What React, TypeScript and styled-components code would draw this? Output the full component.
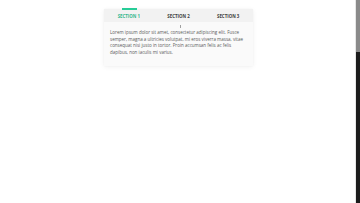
import React from "react";
import styled, { createGlobalStyle } from "styled-components";

const Global = createGlobalStyle`
  html, body { margin: 0; padding: 0; background: #ffffff; overflow: hidden; }
  body { font-family: "Open Sans", "Liberation Sans", sans-serif; }
`;

const Page = styled.div`
  height: 203px;
  padding-top: 9px;
  box-sizing: border-box;
  display: flex;
  justify-content: center;
  align-items: flex-start;
  padding-right: 5px;
`;

const Card = styled.div`
  width: 149px;
  margin-left: 2px;
  background: #fafafa;
  box-shadow: 0 1px 5px rgba(0, 0, 0, 0.06), 0 0 2px rgba(0, 0, 0, 0.03);
`;

const TabBar = styled.div`
  display: grid;
  grid-template-columns: repeat(3, 1fr);
  background: #f2f2f2;
  height: 13px;
`;

const Tab = styled.div<{ $active?: boolean }>`
  position: relative;
  display: flex;
  align-items: center;
  justify-content: center;
  font-size: 4.4px;
  font-weight: 700;
  color: ${(p) => (p.$active ? "#32b88d" : "#404040")};
  &::before {
    content: "";
    display: ${(p) => (p.$active ? "block" : "none")};
    position: absolute;
    top: -1px;
    left: 50%;
    width: 15px;
    height: 2px;
    margin-left: -7px;
    background: #27cc97;
  }
`;

const Content = styled.div`
  position: relative;
  padding: 7px 5px 10px 6px;
  font-size: 4.5px;
  line-height: 6.7px;
  color: #5a5a5a;
`;

const Caret = styled.span`
  position: absolute;
  top: 3px;
  left: 76px;
  width: 1px;
  height: 3px;
  background: #a0a0a0;
`;

const Scrollbar = styled.div`
  position: fixed;
  top: 0;
  right: 0;
  width: 4px;
  height: 203px;
  background: #1c1c1c;
  border-left: 1px solid #e6e6e6;
  display: flex;
  flex-direction: column;
`;

const Thumb = styled.div`
  height: 52px;
  background: #8a8a8a;
`;

export default function App() {
  return (
    <>
      <Global />
      <Page>
        <Card>
          <TabBar>
            <Tab $active>SECTION 1</Tab>
            <Tab>SECTION 2</Tab>
            <Tab>SECTION 3</Tab>
          </TabBar>
          <Content>
            <Caret />
            Lorem ipsum dolor sit amet, consectetur adipiscing elit. Fusce
            semper, magna a ultricies volutpat, mi eros viverra massa, vitae
            consequat nisi justo in tortor. Proin accumsan felis ac felis
            dapibus, non iaculis mi varius.
          </Content>
        </Card>
      </Page>
      <Scrollbar>
        <Thumb />
      </Scrollbar>
    </>
  );
}
